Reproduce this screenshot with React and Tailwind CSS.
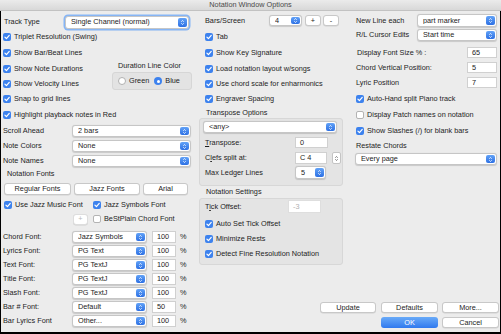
import React from 'react';

function Box({ on }) {
  if (!on) return <span className="w-[8px] h-[8px] rounded-[2px] bg-white border border-[#b3b3b3] shrink-0" />;
  return (
    <span className="w-[8px] h-[8px] rounded-[2px] bg-[#3d82ee] flex items-center justify-center shrink-0">
      <svg viewBox="0 0 10 10" className="w-[8px] h-[8px]">
        <path d="M2.4 5.2 4.3 7.1 7.8 3" fill="none" stroke="white" strokeWidth="1.5" strokeLinecap="round" strokeLinejoin="round" />
      </svg>
    </span>
  );
}

function Cb({ on = true, children, className = '' }) {
  return (
    <div className={`flex items-center gap-[3px] ${className}`}>
      <Box on={on} />
      <span className="whitespace-nowrap">{children}</span>
    </div>
  );
}

function Radio({ on }) {
  if (!on) return <span className="w-[8px] h-[8px] rounded-full bg-white border border-[#b0b0b0] shrink-0" />;
  return (
    <span className="w-[8px] h-[8px] rounded-full bg-[#3d82ee] flex items-center justify-center shrink-0">
      <span className="w-[3px] h-[3px] rounded-full bg-white" />
    </span>
  );
}

function Stepper({ blue = true }) {
  return (
    <span
      className={`w-[9px] self-stretch rounded-[2px] flex items-center justify-center shrink-0 ${
        blue ? 'bg-linear-to-b from-[#62a2f7] to-[#2d70e4]' : 'bg-white border border-[#c4c4c4]'
      }`}
    >
      <svg viewBox="0 0 8 12" className="w-[7px] h-[9px]">
        <path d="M2.4 5 4 3.3 5.6 5M2.4 7 4 8.7 5.6 7" fill="none" stroke={blue ? 'white' : '#666'} strokeWidth="1.1" />
      </svg>
    </span>
  );
}

function Select({ value, className = '' }) {
  return (
    <div className={`flex items-center bg-white border border-[#c6c6c6] rounded-[3px] shadow-[0_0.5px_1px_rgba(0,0,0,0.15)] pl-[5px] pr-[1px] py-[1px] shrink-0 ${className}`}>
      <span className="flex-1 whitespace-nowrap overflow-hidden">{value}</span>
      <Stepper />
    </div>
  );
}

function Input({ value, className = '' }) {
  return (
    <div className={`flex items-center bg-white border border-[#d0d0d0] pl-[4px] shrink-0 ${className}`}>{value}</div>
  );
}

function Btn({ children, className = '' }) {
  return (
    <div className={`flex items-center justify-center bg-white border border-[#c8c8c8] rounded-[3px] shadow-[0_0.5px_0.5px_rgba(0,0,0,0.12)] shrink-0 ${className}`}>
      {children}
    </div>
  );
}

const FONT_ROWS = [
  ['Chord Font:', 'Jazz Symbols', '100'],
  ['Lyrics Font:', 'PG Text', '100'],
  ['Text Font:', 'PG TextJ', '100'],
  ['Title Font:', 'PG TextJ', '100'],
  ['Slash Font:', 'PG TextJ', '100'],
  ['Bar # Font:', 'Default', '50'],
  ['Bar Lyrics Font', 'Other...', '100'],
];

export default function App() {
  return (
    <div className="w-[501px] h-[334px] flex flex-col bg-[#ececec] text-[#1d1d1d] text-[7.3px] leading-none font-['Liberation_Sans',Arial,sans-serif]">
      {/* Title bar */}
      <div className="h-[11px] shrink-0 flex items-center justify-center bg-linear-to-b from-[#ebebeb] to-[#d8d8d8] border-b border-[#c2c2c2] text-[#4a4a4a]">
        Notation Window Options
      </div>

      <div className="flex-1 flex border-l border-r border-b-2 border-black pl-[2px]">
        {/* Left column */}
        <div className="w-[190px] flex flex-col">
          <div className="mt-[4px] h-[14px] flex items-center">
            <span className="w-[62px] pl-[1px]">Track Type</span>
            <Select value="Single Channel (normal)" className="w-[124px] h-[13px] ring-[1.5px] ring-[#86b5f5]" />
          </div>

          <div className="flex">
            <div className="flex flex-col">
              <Cb className="h-[16px]">Triplet Resolution (Swing)</Cb>
              <Cb className="h-[16px]">Show Bar/Beat Lines</Cb>
              <Cb className="h-[16px]">Show Note Durations</Cb>
              <Cb className="h-[14px]">Show Velocity Lines</Cb>
              <Cb className="h-[16px]">Snap to grid lines</Cb>
            </div>
            <div className="ml-auto mr-[1px] w-[80px] flex flex-col mt-[33px]">
              <span className="pl-[6px] h-[8px] leading-[8px] whitespace-nowrap">Duration Line Color</span>
              <div className="mt-[2px] h-[18px] bg-[#e3e3e3] border border-[#d6d6d6] rounded-[3px] flex items-center pl-[5px]">
                <Radio />
                <span className="ml-[3px]">Green</span>
                <span className="ml-[5px]"><Radio on /></span>
                <span className="ml-[3px]">Blue</span>
              </div>
            </div>
          </div>

          <Cb className="h-[16px]">Highlight playback notes in Red</Cb>

          <div className="h-[16px] flex items-center">
            <span className="w-[69px]">Scroll Ahead</span>
            <Select value="2 bars" className="w-[119px] h-[12px]" />
          </div>
          <div className="h-[14px] flex items-center">
            <span className="w-[69px]">Note Colors</span>
            <Select value="None" className="w-[119px] h-[12px]" />
          </div>
          <div className="h-[15px] flex items-center">
            <span className="w-[69px]">Note Names</span>
            <Select value="None" className="w-[119px] h-[12px]" />
          </div>

          <div className="h-[12px] flex items-center pl-[4px]">Notation Fonts</div>
          <div className="mt-[3px] flex pl-[1px]">
            <Btn className="w-[67px] h-[12px]">Regular Fonts</Btn>
            <Btn className="ml-[3px] w-[66px] h-[12px]">Jazz Fonts</Btn>
            <Btn className="ml-[3px] w-[45px] h-[12px]">Arial</Btn>
          </div>

          <div className="mt-[2px] h-[16px] flex items-center pl-[1px]">
            <Cb className="w-[89px]">Use Jazz Music Font</Cb>
            <Cb>Jazz Symbols Font</Cb>
          </div>
          <div className="h-[12px] flex items-center">
            <Btn className="ml-[70px] w-[15px] h-[11px] text-[#b8b8b8] border-[#dddddd]">+</Btn>
            <Cb on={false} className="ml-[5px]">BeStPlain Chord Font</Cb>
          </div>

          <div className="mt-[5px] flex flex-col">
            {FONT_ROWS.map(([label, font, size]) => (
              <div key={label} className="h-[14px] flex items-center">
                <span className="w-[69px] whitespace-nowrap">{label}</span>
                <Select value={font} className="w-[75px] h-[12px]" />
                <Input value={size} className="ml-[5px] w-[24px] h-[12px]" />
                <span className="ml-[4px]">%</span>
              </div>
            ))}
          </div>
        </div>

        {/* Middle + right */}
        <div className="ml-[6px] flex-1 flex flex-col">
          <div className="flex">
            {/* Middle column */}
            <div className="w-[144px] flex flex-col">
              <div className="mt-[4px] h-[11px] flex items-center pl-[6px]">
                <span className="w-[64px]">Bars/Screen</span>
                <Select value="4" className="w-[33px] h-[11px]" />
                <Btn className="ml-[3px] w-[16px] h-[11px]">+</Btn>
                <Btn className="ml-[2px] w-[16px] h-[11px]">-</Btn>
              </div>
              <div className="mt-[3px] flex flex-col pl-[6px]">
                <Cb className="h-[16px]">Tab</Cb>
                <Cb className="h-[16px]">Show Key Signature</Cb>
                <Cb className="h-[16px]">Load notation layout w/songs</Cb>
                <Cb className="h-[14px]">Use chord scale for enharmonics</Cb>
                <Cb className="h-[16px]">Engraver Spacing</Cb>
              </div>

              <div className="h-[11px] flex items-center pl-[7px]">Transpose Options</div>
              <div className="h-[68px] bg-[#e4e4e4] border border-[#d7d7d7] rounded-[3px] flex flex-col">
                <Select value="<any>" className="mt-[2px] ml-[3px] w-[134px] h-[12px]" />
                <div className="mt-[4px] h-[11px] flex items-center pl-[5px]">
                  <span className="w-[90px]"><u>T</u>ranspose:</span>
                  <Input value="0" className="w-[33px] h-[11px]" />
                </div>
                <div className="mt-[4px] h-[12px] flex items-center pl-[5px]">
                  <span className="w-[90px]">C<u>l</u>efs split at:</span>
                  <Input value="C 4" className="w-[32px] h-[12px]" />
                  <span className="ml-[5px] h-[12px] flex"><Stepper blue={false} /></span>
                </div>
                <div className="mt-[2px] h-[13px] flex items-center pl-[5px]">
                  <span className="w-[90px]">Max Ledger Lines</span>
                  <Select value="5" className="w-[31px] h-[13px]" />
                </div>
              </div>

              <div className="h-[12px] flex items-center pl-[7px]">Notation Settings</div>
              <div className="h-[67px] bg-[#e4e4e4] border border-[#d7d7d7] rounded-[3px] flex flex-col">
                <div className="mt-[1px] h-[13px] flex items-center pl-[5px]">
                  <span className="w-[83px]">T<u>i</u>ck Offset:</span>
                  <Input value="-3" className="w-[33px] h-[13px] text-[#b0b0b0] border-[#dedede]" />
                </div>
                <div className="mt-[3px] flex flex-col pl-[5px]">
                  <Cb className="h-[16px]">Auto Set Tick Offset</Cb>
                  <Cb className="h-[14px]">Minimize Rests</Cb>
                  <Cb className="h-[16px]">Detect Fine Resolution Notation</Cb>
                </div>
              </div>
            </div>

            {/* Right column */}
            <div className="ml-[10px] w-[144px] flex flex-col">
              <div className="mt-[3px] h-[13px] flex items-center pl-[3px]">
                <span className="w-[61px]">New Line each</span>
                <Select value="part marker" className="w-[80px] h-[13px]" />
              </div>
              <div className="mt-[2px] h-[12px] flex items-center pl-[3px]">
                <span className="w-[61px]">R/L Cursor Edits</span>
                <Select value="Start time" className="w-[80px] h-[12px]" />
              </div>
              <div className="mt-[6px] h-[11px] flex items-center pl-[4px]">
                <span className="flex-1">Display Font Size % :</span>
                <Input value="65" className="w-[30px] h-[11px]" />
              </div>
              <div className="mt-[4px] h-[11px] flex items-center pl-[3px]">
                <span className="flex-1">Chord Vertical Position:</span>
                <Input value="5" className="w-[30px] h-[11px]" />
              </div>
              <div className="mt-[4px] h-[11px] flex items-center pl-[3px]">
                <span className="flex-1">Lyric Position</span>
                <Input value="7" className="w-[30px] h-[11px]" />
              </div>
              <div className="mt-[3px] flex flex-col pl-[3px]">
                <Cb className="h-[16px]">Auto-Hand split Piano track</Cb>
                <Cb on={false} className="h-[16px]">Display Patch names on notation</Cb>
                <Cb className="h-[16px]">Show Slashes (/) for blank bars</Cb>
              </div>
              <div className="h-[13px] flex items-center pl-[3px]">Restate Chords</div>
              <Select value="Every page" className="mt-[1px] ml-[2px] w-[142px] h-[12px]" />
            </div>
          </div>

          {/* Dialog buttons */}
          <div className="mt-auto flex flex-col items-end gap-[4px] pr-[1px] pb-[4px]">
            <div className="flex">
              <Btn className="w-[56px] h-[11px]">Update</Btn>
              <Btn className="ml-[5px] w-[57px] h-[11px]">Defaults</Btn>
              <Btn className="ml-[4px] w-[57px] h-[11px]">More...</Btn>
            </div>
            <div className="flex">
              <div className="w-[57px] h-[11px] flex items-center justify-center rounded-[3px] bg-linear-to-b from-[#69aaf8] to-[#2f78ee] text-white">OK</div>
              <Btn className="ml-[4px] w-[57px] h-[11px]">Cancel</Btn>
            </div>
          </div>
        </div>
      </div>
    </div>
  );
}
